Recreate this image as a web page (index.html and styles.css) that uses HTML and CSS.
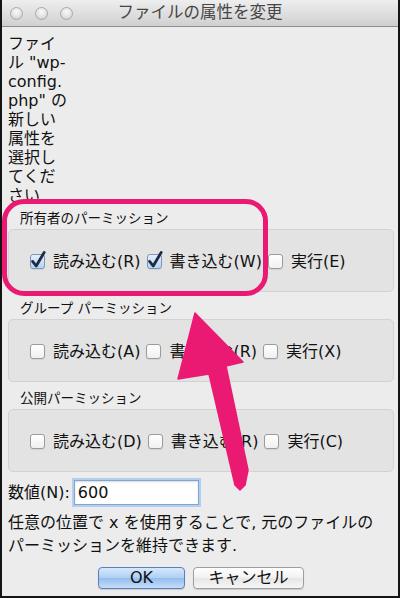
FILE: index.html
```html
<!DOCTYPE html>
<html lang="ja">
<head>
<meta charset="utf-8">
<title>ファイルの属性を変更</title>
<link rel="stylesheet" href="styles.css">
</head>
<body>
<div class="window">
  <div class="titlebar">
    <div class="lights"><span class="light"></span><span class="light"></span><span class="light"></span></div>
    <div class="title">ファイルの属性を変更</div>
    <div></div>
  </div>
  <div class="content">
    <p class="intro">ファイ<br>ル "wp-<br>config.<br>php" の<br>新しい<br>属性を<br>選択し<br>てくだ<br>さい.</p>

    <section class="perm">
      <div class="perm-label">所有者のパーミッション</div>
      <div class="perm-box">
        <span class="opt"><span class="cb checked"><svg viewBox="0 0 15 15"><path d="M2.6 7.4 L6.2 12 L14.2 -1.6" /></svg></span>読み込む(R)</span>
        <span class="opt"><span class="cb checked"><svg viewBox="0 0 15 15"><path d="M2.6 7.4 L6.2 12 L14.2 -1.6" /></svg></span>書き込む(W)</span>
        <span class="opt"><span class="cb"></span>実行(E)</span>
      </div>
    </section>

    <section class="perm">
      <div class="perm-label">グループ パーミッション</div>
      <div class="perm-box">
        <span class="opt"><span class="cb"></span>読み込む(A)</span>
        <span class="opt"><span class="cb"></span>書き込む(R)</span>
        <span class="opt"><span class="cb"></span>実行(X)</span>
      </div>
    </section>

    <section class="perm">
      <div class="perm-label">公開パーミッション</div>
      <div class="perm-box">
        <span class="opt"><span class="cb"></span>読み込む(D)</span>
        <span class="opt"><span class="cb"></span>書き込む(R)</span>
        <span class="opt"><span class="cb"></span>実行(C)</span>
      </div>
    </section>

    <div class="num-row">
      <span class="num-label">数値(N):</span>
      <span class="input">600</span>
    </div>

    <p class="help">任意の位置で x を使用することで, 元のファイルの<br>パーミッションを維持できます.</p>

    <div class="buttons">
      <button class="btn ok">OK</button>
      <button class="btn cancel">キャンセル</button>
    </div>
  </div>

  <div class="highlight"></div>
  <svg class="arrow" viewBox="0 0 400 598">
    <polygon points="195,313 243,362 226,366 248,470 245,485 240,490 235,485 209,374 178,379" />
  </svg>
</div>
</body>
</html>
```

FILE: styles.css
```css
body {
  margin: 0;
  background: #fff;
}

.window {
  position: relative;
  width: 400px;
  height: 598px;
  box-sizing: border-box;
  border: 2px solid #141414;
  border-top: 0;
  background: #ececec;
  font-family: "DejaVu Sans", "Noto Sans CJK JP", sans-serif;
  color: #111;
  overflow: hidden;
}

.titlebar {
  height: 26px;
  border-bottom: 1px solid #8f8f8f;
  background: linear-gradient(#eeeeee, #d0d0d0);
  display: grid;
  grid-template-columns: 1fr auto 1fr;
  align-items: center;
}

.lights {
  display: flex;
  gap: 12px;
  padding-left: 8px;
}

.light {
  width: 13px;
  height: 13px;
  box-sizing: border-box;
  border-radius: 50%;
  border: 1px solid #a9a9a9;
  background: radial-gradient(circle at 50% 35%, #fafafa 0%, #e2e2e2 55%, #c6c6c6 100%);
}

.title {
  font-size: 16.5px;
  line-height: 26px;
  color: #464646;
}

.content {
  padding: 7px 4px 0 6px;
}

.intro {
  margin: 0;
  font-size: 16px;
  line-height: 19px;
}

.perm {
  margin-top: 5px;
}

.perm + .perm {
  margin-top: 8px;
}

.perm-label {
  font-size: 13.5px;
  line-height: 17px;
  padding-left: 12px;
}

.perm-box {
  margin-top: 2px;
  height: 63px;
  box-sizing: border-box;
  border: 1px solid #d2d2d2;
  border-radius: 5px;
  background: #e3e3e3;
  display: flex;
  align-items: center;
  gap: 6px;
  padding: 2px 0 0 21px;
}

.opt {
  display: flex;
  align-items: center;
  font-size: 16px;
  line-height: 20px;
  white-space: nowrap;
}

.cb {
  position: relative;
  width: 15px;
  height: 15px;
  box-sizing: border-box;
  margin-right: 8px;
  border: 1px solid #9b9b9b;
  border-radius: 3px;
  background: linear-gradient(#ffffff, #f0f0f0);
  box-shadow: 0 1px 1px rgba(0, 0, 0, 0.08);
}

.cb.checked {
  border-color: #7e95b6;
  background: linear-gradient(#e3effc, #b8d3f1);
}

.cb svg {
  position: absolute;
  left: -1px;
  top: -1px;
  width: 15px;
  height: 15px;
  overflow: visible;
}

.cb svg path {
  fill: none;
  stroke: #1b2a45;
  stroke-width: 2.8;
  stroke-linecap: round;
  stroke-linejoin: round;
}

.num-row {
  margin-top: 6px;
  display: flex;
  align-items: center;
  height: 29px;
}

.num-label {
  font-size: 16px;
  line-height: 20px;
}

.input {
  box-sizing: border-box;
  width: 125px;
  height: 25px;
  margin-left: 4px;
  border: 1px solid #7ea5d8;
  box-shadow: 0 0 0 2px #b4cfee, inset 0 1px 2px rgba(0, 0, 0, 0.15);
  background: #fff;
  padding-left: 3px;
  font-size: 16px;
  line-height: 23px;
}

.help {
  margin: 4px 0 0;
  font-size: 16px;
  line-height: 23px;
}

.buttons {
  margin-top: 10px;
  display: flex;
  justify-content: center;
  gap: 8px;
}

.btn {
  height: 22px;
  box-sizing: border-box;
  padding: 0;
  font-family: "DejaVu Sans", "Noto Sans CJK JP", sans-serif;
  font-size: 16px;
  line-height: 20px;
  color: #111;
  border-radius: 4px;
  border: 1px solid #9e9e9e;
  background: linear-gradient(#ffffff, #f1f1f1 50%, #e6e6e6 51%, #f6f6f6);
  box-shadow: 0 1px 1px rgba(0, 0, 0, 0.15);
}

.btn.ok {
  width: 87px;
  border-color: #5a80bb;
  background: linear-gradient(#d6e8fb, #aecff4 50%, #94bdee 51%, #c4def9);
}

.btn.cancel {
  width: 111px;
}

.highlight {
  position: absolute;
  left: 0;
  top: 199px;
  width: 266px;
  height: 97px;
  box-sizing: border-box;
  border: 5px solid #ea1a73;
  border-radius: 22px;
}

.arrow {
  position: absolute;
  left: -2px;
  top: 0;
  width: 400px;
  height: 598px;
  pointer-events: none;
}

.arrow polygon {
  fill: #ea1a73;
  stroke: #ea1a73;
  stroke-width: 1.5;
  stroke-linejoin: round;
}
```
